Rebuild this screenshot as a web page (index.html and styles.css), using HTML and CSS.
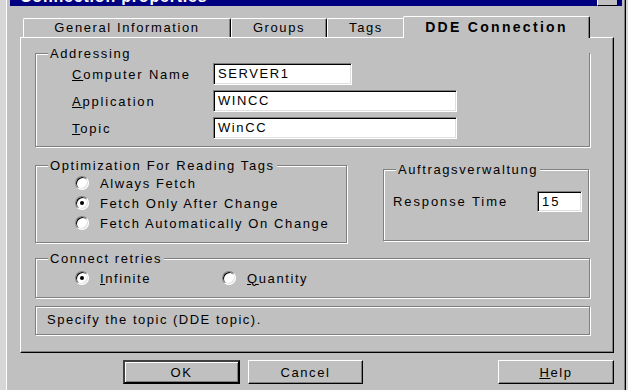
FILE: index.html
```html
<!DOCTYPE html>
<html>
<head>
<meta charset="utf-8">
<link rel="stylesheet" href="styles.css">
</head>
<body>
<div class="screen">
  <div class="frame">
    <div class="titlebar">
      <span class="title">Connection properties</span>
      <span class="close"></span>
    </div>
    <div class="tabs">
      <div class="tab t1">General Information</div>
      <div class="tab t2">Groups</div>
      <div class="tab t3">Tags</div>
      <div class="tab sel">DDE Connection</div>
    </div>
    <div class="panel">
      <div class="group addr">
        <div class="legend">Addressing</div>
        <div class="field-row"><span class="lbl"><u>C</u>omputer Name</span><span class="input short">SERVER1</span></div>
        <div class="field-row"><span class="lbl"><u>A</u>pplication</span><span class="input long">WINCC</span></div>
        <div class="field-row"><span class="lbl"><u>T</u>opic</span><span class="input long">WinCC</span></div>
      </div>
      <div class="mid">
        <div class="group opt">
          <div class="legend">Optimization For Reading Tags</div>
          <div class="radio-row"><span class="radio"></span><span>Always Fetch</span></div>
          <div class="radio-row"><span class="radio on"></span><span>Fetch Only After Change</span></div>
          <div class="radio-row"><span class="radio"></span><span>Fetch Automatically On Change</span></div>
        </div>
        <div class="group auft">
          <div class="legend">Auftragsverwaltung</div>
          <div class="resp-row"><span>Response Time</span><span class="input tiny">15</span></div>
        </div>
      </div>
      <div class="group retries">
        <div class="legend">Connect retries</div>
        <div class="retry-row">
          <div class="radio-row r-inf"><span class="radio on"></span><span><u>I</u>nfinite</span></div>
          <div class="radio-row r-qty"><span class="radio"></span><span><u>Q</u>uantity</span></div>
        </div>
      </div>
      <div class="status">Specify the topic (DDE topic).</div>
    </div>
    <div class="buttons">
      <div class="btn default">OK</div>
      <div class="btn cancel">Cancel</div>
      <div class="btn help"><u>H</u>elp</div>
    </div>
  </div>
</div>
</body>
</html>
```

FILE: styles.css
```css
* { box-sizing: border-box; }
html, body { margin: 0; padding: 0; }
body {
  font-family: "Liberation Sans", Arial, sans-serif;
  font-size: 13px;
  letter-spacing: 1.6px;
  color: #000;
  background: #d6d6d6;
}
.screen {
  width: 628px;
  height: 390px;
  overflow: hidden;
  padding-left: 6px;
  background: #d6d6d6;
}
.frame {
  width: 620px;
  height: 390px;
  background: #c0c0c0;
  border-left: 1px solid #fff;
  border-right: 1px solid #000;
  box-shadow: inset -1px 0 0 #808080;
  padding-left: 3px;
  padding-right: 3px;
}
.titlebar {
  width: 612px;
  height: 6px;
  background: #000080;
  overflow: hidden;
  display: flex;
  justify-content: space-between;
  padding-left: 10px;
  padding-right: 4px;
}
.title {
  color: #fff;
  font-weight: bold;
  font-size: 16px;
  letter-spacing: 0.8px;
  line-height: 16px;
  margin-top: -11px;
  height: 18px;
}
.close {
  width: 21px;
  height: 14px;
  margin-top: -8px;
  background: #c0c0c0;
  border: 1px solid;
  border-color: #fff #000 #000 #fff;
}
.tabs {
  display: flex;
  align-items: flex-end;
  margin-top: 10px;
  height: 21px;
  padding-left: 13px;
  position: relative;
  z-index: 1;
}
.tab {
  height: 19px;
  border-top: 1px solid #fff;
  border-left: 1px solid #fff;
  border-right: 1px solid #000;
  border-top-left-radius: 2px;
  border-top-right-radius: 2px;
  box-shadow: inset -1px 0 0 #808080;
  display: flex;
  align-items: center;
  justify-content: center;
  padding-bottom: 1px;
  background: #c0c0c0;
}
.t1 { width: 208px; }
.t2 { width: 96px; }
.t3 { width: 78px; }
.sel {
  width: 187px;
  height: 22px;
  margin-left: -2px;
  margin-bottom: -1px;
  font-weight: bold;
  font-size: 14px;
  letter-spacing: 2.3px;
  padding-bottom: 2px;
}
.panel {
  margin-left: 10px;
  width: 594px;
  height: 316px;
  border: 1px solid;
  border-color: #fff #000 #000 #fff;
  box-shadow: inset -1px -1px 0 #808080;
  padding: 15px 0 0 14px;
}
.group {
  border: 1px solid #808080;
  box-shadow: 1px 1px 0 #fff, inset 1px 1px 0 #fff;
}
.legend {
  display: table;
  margin-top: -8px;
  margin-left: 12px;
  padding: 0 2px;
  line-height: 15px;
  background: #c0c0c0;
}
.addr {
  width: 555px;
  height: 94px;
  display: flex;
  flex-direction: column;
}
.addr .legend { margin-bottom: 2px; }
.field-row {
  display: flex;
  align-items: center;
  height: 22px;
  margin-bottom: 5px;
}
.lbl {
  width: 177px;
  padding-left: 36px;
  letter-spacing: 1.8px;
}
.input {
  display: block;
  height: 22px;
  background: #fff;
  border: 1px solid;
  border-color: #808080 #fff #fff #808080;
  box-shadow: inset 1px 1px 0 #000, inset -1px -1px 0 #dfdfdf;
  padding: 2px 0 0 4px;
  line-height: 16px;
}
.short { width: 139px; }
.long { width: 244px; }
.tiny { width: 45px; height: 21px; }
.mid {
  display: flex;
  align-items: flex-start;
  margin-top: 18px;
}
.opt {
  width: 312px;
  height: 78px;
}
.radio-row {
  display: flex;
  align-items: center;
  height: 20px;
}
.opt .radio-row { padding-left: 39px; }
.radio {
  width: 14px;
  height: 14px;
  border-radius: 50%;
  background: #fff;
  border: 1px solid;
  border-color: #808080 #fff #fff #808080;
  box-shadow: inset 1px 1px 0 #000, inset -1px -1px 0 #dfdfdf;
  margin-right: 11px;
  display: flex;
  align-items: center;
  justify-content: center;
  flex: none;
}
.radio.on::after {
  content: "";
  width: 4px;
  height: 4px;
  border-radius: 50%;
  background: #000;
}
.auft {
  width: 206px;
  height: 72px;
  margin-left: 36px;
  margin-top: 4px;
}
.resp-row {
  display: flex;
  align-items: center;
  justify-content: space-between;
  padding: 14px 6px 0 9px;
  letter-spacing: 1.9px;
}
.retries {
  width: 555px;
  height: 40px;
  margin-top: 15px;
}
.retry-row {
  display: flex;
  padding-top: 2px;
}
.r-inf { padding-left: 39px; width: 186px; }
.status {
  width: 555px;
  height: 29px;
  margin-top: 8px;
  border: 1px solid #808080;
  box-shadow: 1px 1px 0 #fff, inset 1px 1px 0 #fff;
  padding: 5px 0 0 11px;
  line-height: 15px;
  letter-spacing: 1.5px;
}
.buttons {
  display: flex;
  margin-top: 7px;
  padding-left: 113px;
}
.btn {
  height: 24px;
  border: 1px solid;
  border-color: #fff #000 #000 #fff;
  box-shadow: inset -1px -1px 0 #808080;
  display: flex;
  align-items: center;
  justify-content: center;
}
.btn.default {
  width: 117px;
  border: 2px solid #000;
  border-top-color: #404040;
  border-left-color: #404040;
  box-shadow: inset 1px 1px 0 #fff, inset -1px -1px 0 #808080;
}
.cancel { width: 115px; margin-left: 8px; }
.help { width: 116px; margin-left: 135px; }
```
